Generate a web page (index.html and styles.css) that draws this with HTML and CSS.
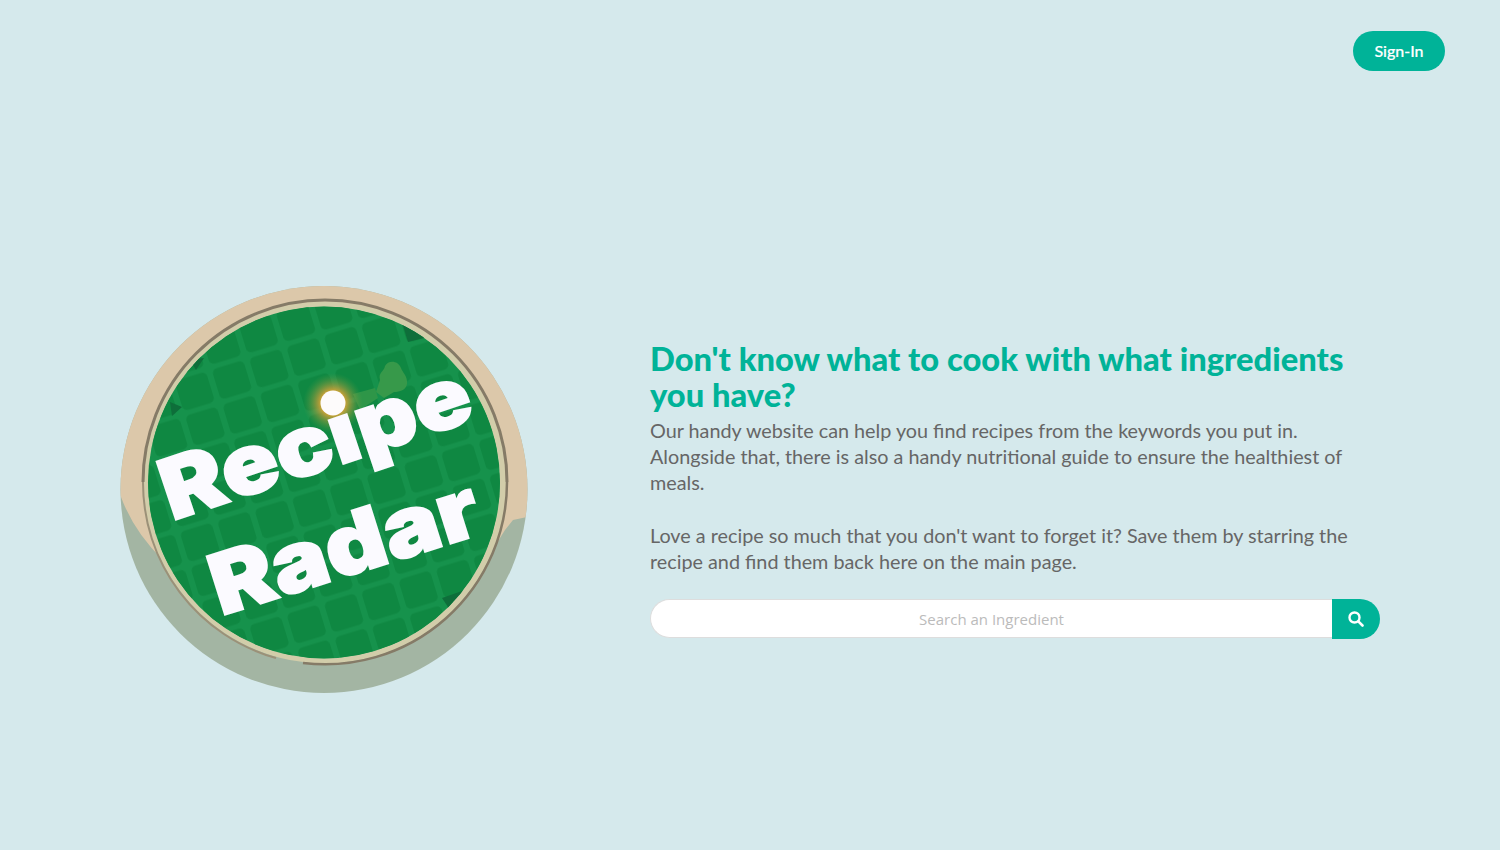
FILE: index.html
```html
<!DOCTYPE html>
<html lang="en">
<head>
<meta charset="utf-8">
<title>Recipe Radar</title>
<link rel="stylesheet" href="styles.css">
</head>
<body>
<header class="top">
  <a class="signin" href="#">Sign-In</a>
</header>
<main class="hero">
  <svg class="logo" viewBox="110 275 430 430" width="430" height="430" aria-label="Recipe Radar logo">
    <defs>
      <pattern id="cells" width="39" height="36.5" patternUnits="userSpaceOnUse" patternTransform="translate(232 380) rotate(-17) translate(-19.5 -18.25)">
        <rect x="3" y="2.5" width="33" height="31.5" rx="5" fill="#0f8842"/>
      </pattern>
      <radialGradient id="glow">
        <stop offset="0.3" stop-color="#ffac2e"/>
        <stop offset="0.55" stop-color="#d7a03a" stop-opacity="0.6"/>
        <stop offset="1" stop-color="#5f9c44" stop-opacity="0"/>
      </radialGradient>
      <clipPath id="disc"><circle cx="324" cy="482.5" r="176"/></clipPath>
      <clipPath id="plate"><circle cx="324" cy="489.5" r="203.5"/></clipPath>
    </defs>
    <circle cx="324" cy="489.5" r="203.5" fill="#a3b5a3"/>
    <path clip-path="url(#plate)" d="M110 480L121 497Q134 532 163 560L480 570L505 530L513 520L540 514L540 270L110 270Z" fill="#dcc8aa"/>
    <circle cx="325" cy="482.500" r="181" fill="#d2cdaa"/>
    <path d="M143 482A182 182 0 0 1 507 482" fill="none" stroke="#857b67" stroke-width="3"/>
    <path d="M507 482A182 182 0 0 1 303 663" fill="none" stroke="#857b67" stroke-width="2.500"/>
    <path d="M143 482A182 182 0 0 0 276 658" fill="none" stroke="#9b9178" stroke-width="2"/>
    <circle cx="324" cy="482.500" r="176" fill="#16924c"/>
    <g clip-path="url(#disc)">
      <circle cx="324" cy="482.500" r="176" fill="url(#cells)"/>
      <path d="M402 322L428 337L408 342Z" fill="#0e6e3a"/>
      <path d="M170 402L182 407L172 416Z" fill="#0e6e3a"/>
      <path d="M190 360L204 358L196 370Z" fill="#0e6e3a"/>
      <path d="M442 598L465 590L450 610Z" fill="#0e6e3a"/>
      <path d="M380 380C378 372 384 372 385 366C388 360 398 360 401 368C402 372 408 376 407 384C406 390 400 392 394 392L384 398L376 392Z" fill="#37994a"/>
      <path d="M353 394L375 388L378 398L360 410Z" fill="#2e9648"/>
      <circle cx="333" cy="403" r="30" fill="url(#glow)"/>
    </g>
    <g class="logo-text">
      <text x="172" y="521" transform="rotate(-18.500 172 521)" textLength="322" lengthAdjust="spacingAndGlyphs">Recipe</text>
      <text x="221" y="616" transform="rotate(-17.500 221 616)" textLength="277" lengthAdjust="spacingAndGlyphs">Radar</text>
    </g>
    <circle cx="333" cy="403" r="12.500" fill="#fdfbfb"/>
  </svg>
  <section class="intro">
    <h1 class="title">Don't know what to cook with what ingredients you have?</h1>
    <p class="copy">Our handy website can help you find recipes from the keywords you put in. Alongside that, there is also a handy nutritional guide to ensure the healthiest of meals.</p>
    <p class="copy">Love a recipe so much that you don't want to forget it? Save them by starring the recipe and find them back here on the main page.</p>
    <form class="search">
      <input class="search-input" type="text" placeholder="Search an Ingredient">
      <button class="search-btn" type="button" aria-label="Search">
        <svg viewBox="0 0 16 16" width="16" height="16"><circle cx="6.500" cy="6.500" r="5" fill="none" stroke="#fff" stroke-width="2.400"/><path d="M10.300 10.300L14.500 14.500" stroke="#fff" stroke-width="2.600" stroke-linecap="round"/></svg>
      </button>
    </form>
  </section>
</main>
</body>
</html>
```
FILE: styles.css
```css
* { box-sizing: border-box; }
html, body { margin: 0; height: 100%; }
body {
  background: #d5e9ec;
  font-family: Lato, "Liberation Sans", sans-serif;
  overflow: hidden;
}
.top {
  height: 130px;
  padding: 31px 55px 0 0;
  display: flex;
  justify-content: flex-end;
  align-items: flex-start;
}
.signin {
  display: flex;
  align-items: center;
  justify-content: center;
  width: 92px;
  height: 40px;
  padding-bottom: 2px;
  border-radius: 20px;
  background: #00b398;
  color: #fff;
  font-size: 16px;
  font-weight: 500;
  -webkit-text-stroke: 0.2px #fff;
  text-decoration: none;
}
.hero {
  height: 720px;
  padding-left: 110px;
  display: flex;
  align-items: center;
  gap: 110px;
}
.logo { flex: none; display: block; }
.logo-text text {
  font-family: Inter, "Liberation Sans", sans-serif;
  font-weight: 900;
  font-size: 84px;
  fill: #fbfaff;
  stroke: #fbfaff;
  stroke-width: 2px;
}
.intro { width: 730px; flex: none; }
.title {
  margin: 0 0 4px;
  color: #00b398;
  font-size: 32.7px;
  line-height: 36px;
  font-weight: 900;
}
.copy {
  margin: 0 0 27px;
  color: #666;
  font-size: 19.8px;
  line-height: 26px;
}
.copy + .copy { margin-bottom: 25px; }
.search { display: flex; height: 40px; align-items: flex-start; }
.search-input {
  flex: 1;
  min-width: 0;
  height: 39px;
  border: 1px solid #ddd;
  border-right: 0;
  border-radius: 20px 0 0 20px;
  background: #fff;
  text-align: center;
  font-family: "Open Sans", sans-serif;
  font-size: 15px;
  padding: 1px 0 0;
  outline: none;
}
.search-input::placeholder { color: #bbb; opacity: 1; }
.search-btn {
  flex: none;
  width: 48px;
  height: 40px;
  border: 0;
  padding: 0;
  background: #00b398;
  border-radius: 0 24px 24px 0;
  display: flex;
  align-items: center;
  justify-content: center;
}
```
